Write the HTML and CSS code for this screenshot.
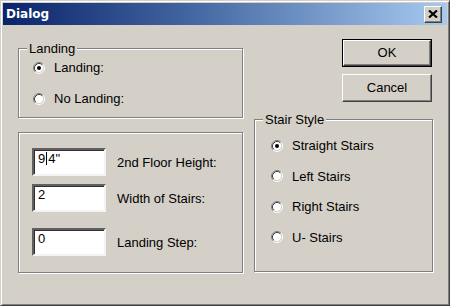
FILE: index.html
```html
<!DOCTYPE html>
<html>
<head>
<meta charset="utf-8">
<link rel="stylesheet" href="styles.css">
</head>
<body>
<div class="window">
  <div class="titlebar">
    <span class="title">Dialog</span>
    <div class="close">
      <svg width="10" height="8" viewBox="0 0 10 8"><path d="M1 0.5 L9 7.5 M9 0.5 L1 7.5" stroke="#000" stroke-width="2.2" fill="none"/></svg>
    </div>
  </div>
  <div class="content">
    <div class="col-left">
      <div class="group group-landing">
        <span class="legend">Landing</span>
        <div class="radio-row">
          <svg class="radio" width="12" height="12" viewBox="0 0 12 12"><circle cx="6" cy="6" r="4.5" fill="#fff"/><path d="M2.11 9.89 A5.5 5.5 0 0 1 9.89 2.11" stroke="#808080" fill="none"/><path d="M9.89 2.11 A5.5 5.5 0 0 1 2.11 9.89" stroke="#fff" fill="none"/><path d="M2.82 9.18 A4.5 4.5 0 0 1 9.18 2.82" stroke="#404040" fill="none"/><path d="M9.18 2.82 A4.5 4.5 0 0 1 2.82 9.18" stroke="#d4d0c8" fill="none"/><circle cx="6" cy="6" r="2" fill="#000"/></svg>
          <span>Landing:</span>
        </div>
        <div class="radio-row">
          <svg class="radio" width="12" height="12" viewBox="0 0 12 12"><circle cx="6" cy="6" r="4.5" fill="#fff"/><path d="M2.11 9.89 A5.5 5.5 0 0 1 9.89 2.11" stroke="#808080" fill="none"/><path d="M9.89 2.11 A5.5 5.5 0 0 1 2.11 9.89" stroke="#fff" fill="none"/><path d="M2.82 9.18 A4.5 4.5 0 0 1 9.18 2.82" stroke="#404040" fill="none"/><path d="M9.18 2.82 A4.5 4.5 0 0 1 2.82 9.18" stroke="#d4d0c8" fill="none"/></svg>
          <span>No Landing:</span>
        </div>
      </div>
      <div class="group group-fields">
        <div class="field-row">
          <div class="field">9<span class="caret"></span>4"</div>
          <span>2nd Floor Height:</span>
        </div>
        <div class="field-row">
          <div class="field">2</div>
          <span>Width of Stairs:</span>
        </div>
        <div class="field-row field-row-spaced">
          <div class="field">0</div>
          <span>Landing Step:</span>
        </div>
      </div>
    </div>
    <div class="col-right">
      <div class="btn btn-default"><div class="btn-face">OK</div></div>
      <div class="btn"><div class="btn-face">Cancel</div></div>
      <div class="group group-style">
        <span class="legend">Stair Style</span>
        <div class="radio-row">
          <svg class="radio" width="12" height="12" viewBox="0 0 12 12"><circle cx="6" cy="6" r="4.5" fill="#fff"/><path d="M2.11 9.89 A5.5 5.5 0 0 1 9.89 2.11" stroke="#808080" fill="none"/><path d="M9.89 2.11 A5.5 5.5 0 0 1 2.11 9.89" stroke="#fff" fill="none"/><path d="M2.82 9.18 A4.5 4.5 0 0 1 9.18 2.82" stroke="#404040" fill="none"/><path d="M9.18 2.82 A4.5 4.5 0 0 1 2.82 9.18" stroke="#d4d0c8" fill="none"/><circle cx="6" cy="6" r="2" fill="#000"/></svg>
          <span>Straight Stairs</span>
        </div>
        <div class="radio-row">
          <svg class="radio" width="12" height="12" viewBox="0 0 12 12"><circle cx="6" cy="6" r="4.5" fill="#fff"/><path d="M2.11 9.89 A5.5 5.5 0 0 1 9.89 2.11" stroke="#808080" fill="none"/><path d="M9.89 2.11 A5.5 5.5 0 0 1 2.11 9.89" stroke="#fff" fill="none"/><path d="M2.82 9.18 A4.5 4.5 0 0 1 9.18 2.82" stroke="#404040" fill="none"/><path d="M9.18 2.82 A4.5 4.5 0 0 1 2.82 9.18" stroke="#d4d0c8" fill="none"/></svg>
          <span>Left Stairs</span>
        </div>
        <div class="radio-row">
          <svg class="radio" width="12" height="12" viewBox="0 0 12 12"><circle cx="6" cy="6" r="4.5" fill="#fff"/><path d="M2.11 9.89 A5.5 5.5 0 0 1 9.89 2.11" stroke="#808080" fill="none"/><path d="M9.89 2.11 A5.5 5.5 0 0 1 2.11 9.89" stroke="#fff" fill="none"/><path d="M2.82 9.18 A4.5 4.5 0 0 1 9.18 2.82" stroke="#404040" fill="none"/><path d="M9.18 2.82 A4.5 4.5 0 0 1 2.82 9.18" stroke="#d4d0c8" fill="none"/></svg>
          <span>Right Stairs</span>
        </div>
        <div class="radio-row">
          <svg class="radio" width="12" height="12" viewBox="0 0 12 12"><circle cx="6" cy="6" r="4.5" fill="#fff"/><path d="M2.11 9.89 A5.5 5.5 0 0 1 9.89 2.11" stroke="#808080" fill="none"/><path d="M9.89 2.11 A5.5 5.5 0 0 1 2.11 9.89" stroke="#fff" fill="none"/><path d="M2.82 9.18 A4.5 4.5 0 0 1 9.18 2.82" stroke="#404040" fill="none"/><path d="M9.18 2.82 A4.5 4.5 0 0 1 2.82 9.18" stroke="#d4d0c8" fill="none"/></svg>
          <span>U- Stairs</span>
        </div>
      </div>
    </div>
  </div>
</div>
</body>
</html>
```

FILE: styles.css
```css
html, body {
  margin: 0;
  padding: 0;
  background: #d4d0c8;
}
body {
  font-family: "Liberation Sans", Arial, sans-serif;
  font-size: 13px;
  color: #000;
}
.window {
  width: 450px;
  height: 306px;
  box-sizing: border-box;
  border: 1px solid;
  border-color: #d4d0c8 #404040 #404040 #d4d0c8;
  box-shadow: inset 1px 1px 0 #fff, inset -1px -1px 0 #808080;
  padding: 2px;
  background: #d4d0c8;
  display: flex;
  flex-direction: column;
}
.titlebar {
  height: 22px;
  flex: none;
  display: flex;
  align-items: center;
  justify-content: space-between;
  padding: 0 5px 0 3px;
  background: linear-gradient(to right, #0a246a 0%, #40629e 40%, #a6caf0 100%);
}
.title {
  font-family: "DejaVu Sans", Tahoma, sans-serif;
  font-weight: bold;
  font-size: 12px;
  color: #fff;
}
.close {
  width: 18px;
  height: 17px;
  box-sizing: border-box;
  background: #d4d0c8;
  border: 1px solid;
  border-color: #fff #404040 #404040 #fff;
  box-shadow: inset -1px -1px 0 #808080;
  display: flex;
  align-items: center;
  justify-content: center;
  padding: 0 1px 1px 0;
}
.close svg { display: block; }
.content {
  display: flex;
  gap: 11px;
  padding: 14px 0 0 15px;
}
.col-left {
  width: 225px;
  margin-top: 9px;
  display: flex;
  flex-direction: column;
  gap: 14px;
}
.col-right {
  width: 179px;
  display: flex;
  flex-direction: column;
  align-items: flex-end;
  gap: 7px;
}
.group {
  position: relative;
  box-sizing: border-box;
  border: 1px solid #808080;
  box-shadow: inset 1px 1px 0 #fff, 1px 1px 0 #fff;
}
.legend {
  position: absolute;
  top: -8px;
  left: 8px;
  padding: 0 2px;
  line-height: 15px;
  background: #d4d0c8;
}
.group-landing {
  height: 70px;
  padding: 11px 0 0 14px;
  display: flex;
  flex-direction: column;
  gap: 16px;
}
.group-fields {
  height: 141px;
  padding: 15px 0 0 13px;
  display: flex;
  flex-direction: column;
  gap: 8px;
}
.group-style {
  align-self: stretch;
  height: 153px;
  margin-top: 10px;
  padding: 18px 0 0 16px;
  display: flex;
  flex-direction: column;
  gap: 15.6px;
}
.radio-row {
  display: flex;
  align-items: center;
  height: 15px;
  line-height: 15px;
  gap: 9px;
}
.radio { display: block; flex: none; }
.field-row {
  display: flex;
  align-items: center;
  gap: 11px;
  height: 28px;
}
.field-row-spaced { margin-top: 8px; }
.field {
  width: 74px;
  height: 28px;
  box-sizing: border-box;
  background: #fff;
  border: 2px solid;
  border-color: #606060 #f4f4f4 #f4f4f4 #606060;
  box-shadow: inset 1px 1px 0 #303030;
  padding: 2px 3px 0 4px;
  line-height: 13px;
  flex: none;
}
.caret {
  display: inline-block;
  width: 1px;
  height: 13px;
  background: #000;
  vertical-align: top;
  margin: 0 1px;
}
.btn {
  width: 90px;
  height: 28px;
  box-sizing: border-box;
  margin-right: 1px;
  display: flex;
}
.btn-face {
  flex: 1;
  box-sizing: border-box;
  border: 1px solid;
  border-color: #fff #404040 #404040 #fff;
  box-shadow: inset -1px -1px 0 #808080;
  display: flex;
  align-items: center;
  justify-content: center;
  padding-bottom: 1px;
}
.btn-default {
  border: 1px solid #000;
}
```
